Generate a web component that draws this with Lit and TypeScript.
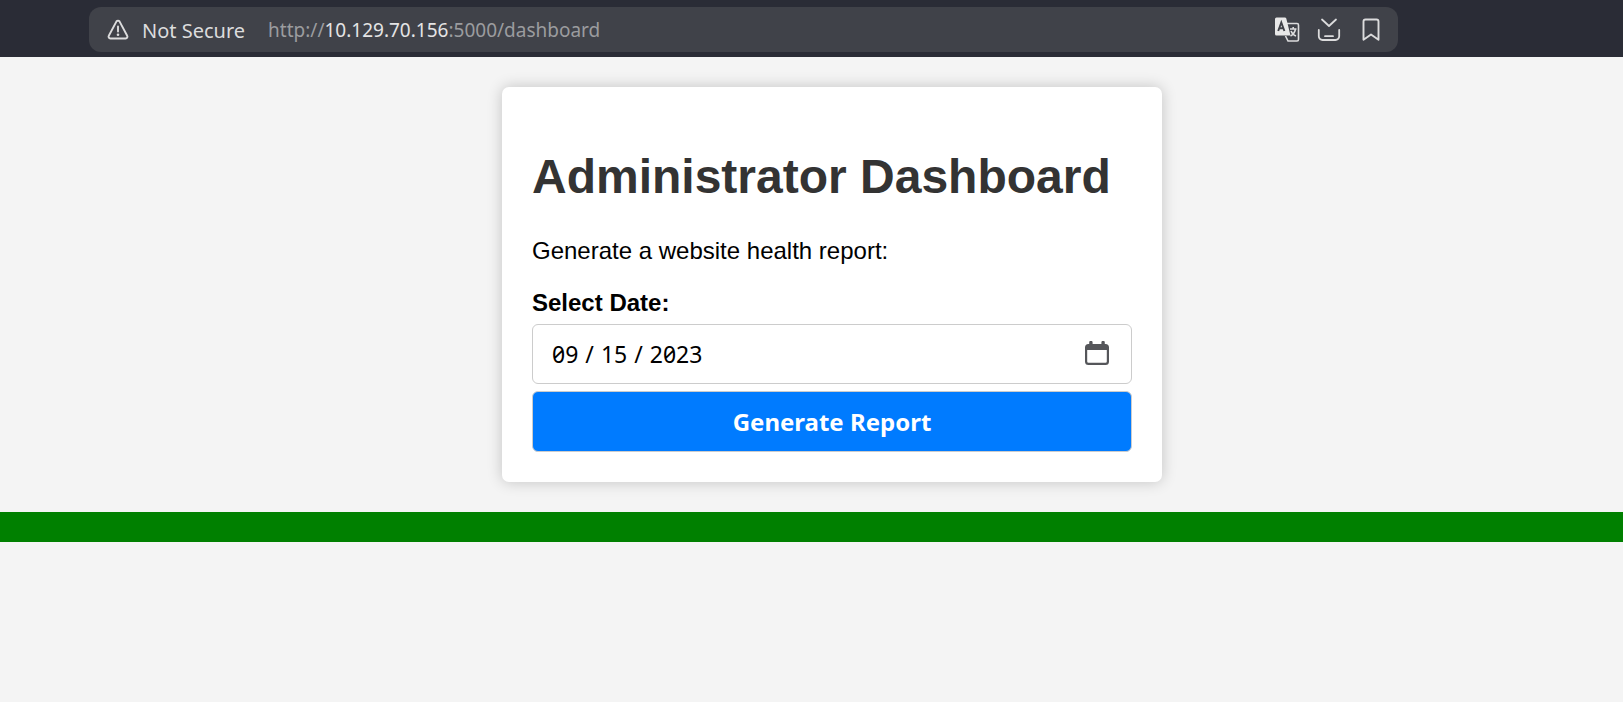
import { LitElement, html, css } from "lit";
import { customElement, state } from "lit/decorators.js";

@customElement("address-bar")
export class AddressBar extends LitElement {
  static styles = css`
    :host {
      display: block;
      background: #2a2c36;
      padding: 7px 225px 5px 89px;
      font-family: "Noto Sans", "Open Sans", sans-serif;
      font-size: 20px;
      line-height: 43px;
      color: #dcdcdd;
    }
    .bar {
      display: flex;
      align-items: center;
      height: 45px;
      padding: 0 14px 0 18px;
      border-radius: 12px;
      background: #404249;
    }
    .security {
      display: flex;
      align-items: center;
      gap: 13px;
      margin-right: 23px;
    }
    button {
      border: 0;
      padding: 0;
      background: none;
      color: inherit;
      font: inherit;
      white-space: nowrap;
      cursor: pointer;
    }
    svg {
      display: block;
      flex: none;
    }
    .security span,
    .url {
      padding-top: 2px;
    }
    .url {
      flex: 1;
      min-width: 0;
      overflow: hidden;
      white-space: nowrap;
      text-overflow: ellipsis;
      text-decoration: none;
      font-size: 19px;
      color: #9b9c9f;
    }
    .host {
      color: #e4e4e5;
    }
    .actions {
      display: flex;
      gap: 16px;
    }
  `;

  render() {
    return html`
      <div class="bar">
        <button class="security">
          <svg width="22" height="22" viewBox="0 0 22 22" fill="none" stroke="currentColor" stroke-width="1.9" stroke-linejoin="round" stroke-linecap="round">
            <path d="M9.500 2.400a1.800 1.800 0 0 1 3 0l7.700 14.400a1.800 1.800 0 0 1-1.500 2.700H3.300a1.800 1.800 0 0 1-1.500-2.700z" />
            <path d="M11 7.500v5" />
            <circle cx="11" cy="15.800" r="1.300" fill="currentColor" stroke="none" />
          </svg>
          <span>Not Secure</span>
        </button>
        <a class="url" href="http://10.129.70.156:5000/dashboard">http://<span class="host">10.129.70.156</span>:5000/dashboard</a>
        <div class="actions">
          <button aria-label="Translate page">
            <svg width="26" height="26" viewBox="0 0 26 26">
              <path d="M13 6.500h10a1.500 1.500 0 0 1 1.500 1.500V22.500a1.500 1.500 0 0 1-1.500 1.500H14L11.500 19" fill="none" stroke="currentColor" stroke-width="1.600" />
              <path d="M2.500 .5h8.300a1.500 1.500 0 0 1 1.500 1.100L16.500 18.500H2.500A1.500 1.500 0 0 1 1 17V2A1.500 1.500 0 0 1 2.500 .5z" fill="#e8e8e8" />
              <path d="M4.200 14L7.300 5.500 10.400 14M5.300 11.200h4" fill="none" stroke="#404249" stroke-width="1.900" />
              <path d="M16 12H22.500M19.200 10v2M21.500 12.300c-.8 3.200-2.500 5.500-5 6.700M17 14c1 2.300 2.500 4.200 5 5" fill="none" stroke="currentColor" stroke-width="1.600" />
            </svg>
          </button>
          <button aria-label="Save to Pocket">
            <svg width="26" height="26" viewBox="0 0 26 26" fill="none" stroke="currentColor" stroke-width="1.800" stroke-linecap="round" stroke-linejoin="round">
              <path d="M6 2.500l7 6.500 7-6.500" />
              <path d="M2.800 13v6.300a3.700 3.700 0 0 0 3.700 3.700h13a3.700 3.700 0 0 0 3.700-3.700V13" />
              <path d="M9 19.200h8" />
            </svg>
          </button>
          <button aria-label="Bookmark page">
            <svg width="26" height="26" viewBox="0 0 26 26" fill="none" stroke="currentColor" stroke-width="1.900" stroke-linejoin="round">
              <path d="M5.500 22.800V4.500a2 2 0 0 1 2-2h11a2 2 0 0 1 2 2v18.300L13 17.500z" />
            </svg>
          </button>
        </div>
      </div>
    `;
  }
}

@customElement("report-card")
export class ReportCard extends LitElement {
  static styles = css`
    :host {
      display: block;
      box-sizing: border-box;
      max-width: 660px;
      margin: 0 auto;
      padding: 30px;
      border-radius: 7px;
      background: #fff;
      box-shadow: 0 0 15px rgba(0, 0, 0, 0.2);
      font-size: 24px;
      line-height: 28px;
      color: #000;
    }
    h1 {
      margin: 33px 0;
      font-size: 48px;
      line-height: 54px;
      color: #333;
    }
    p {
      margin: 0 0 24px;
    }
    form {
      display: flex;
      flex-direction: column;
    }
    label {
      margin-bottom: 7px;
      font-weight: bold;
    }
    input,
    button {
      box-sizing: border-box;
      width: 100%;
      height: 60px;
      border: 1px solid #ccc;
      border-radius: 6px;
    }
    input {
      margin: 0 0 7px;
      padding: 0 21px 0 16px;
      background: #fff;
      color: #000;
      font-family: "Noto Sans", "DejaVu Sans Mono", monospace;
      font-feature-settings: "zero";
      font-size: 23px;
      line-height: 28px;
    }
    input::-webkit-datetime-edit-month-field,
    input::-webkit-datetime-edit-day-field,
    input::-webkit-datetime-edit-year-field {
      padding: 0 3px;
    }
    input::-webkit-datetime-edit-text {
      padding: 0 4px;
    }
    input::-webkit-calendar-picker-indicator {
      width: 26px;
      height: 26px;
      margin: 0;
      padding: 0;
      background: url("data:image/svg+xml,%3Csvg xmlns='http://www.w3.org/2000/svg' viewBox='0 0 26 26'%3E%3Cpath fill='%2355565a' fill-rule='evenodd' d='M5.200 1.500a1.700 1.700 0 0 1 3.400 0V3h8.800V1.500a1.700 1.700 0 0 1 3.400 0V3h.7A3.500 3.500 0 0 1 25 6.500V20.500a3.500 3.500 0 0 1-3.500 3.500h-17A3.500 3.500 0 0 1 1 20.500v-14A3.500 3.500 0 0 1 4.500 3h.7zM3.200 9v11.500A1.300 1.300 0 0 0 4.500 21.800h17a1.300 1.300 0 0 0 1.300-1.300V9z'/%3E%3C/svg%3E") center / contain no-repeat;
    }
    button {
      height: 61px;
      padding: 0;
      background: #007bff;
      color: #fff;
      font-family: "Noto Sans", "Open Sans", sans-serif;
      font-size: 24px;
      font-weight: bold;
      cursor: pointer;
    }
  `;

  @state() private date = "2023-09-15";

  private onDate(event: Event) {
    this.date = (event.target as HTMLInputElement).value;
  }

  render() {
    return html`
      <h1>Administrator Dashboard</h1>
      <p>Generate a website health report:</p>
      <form @submit=${(event: Event) => event.preventDefault()}>
        <label for="date">Select Date:</label>
        <input id="date" name="date" type="date" .value=${this.date} @change=${this.onDate} />
        <button type="submit">Generate Report</button>
      </form>
    `;
  }
}

@customElement("app-root")
export class AppRoot extends LitElement {
  static styles = css`
    :host {
      display: block;
      min-height: 100vh;
      background: #f4f4f4;
      font-family: "Liberation Sans", Arial, sans-serif;
    }
    main {
      padding: 30px 0 30px 41px;
    }
    .status {
      height: 30px;
      background: #008000;
    }
  `;

  render() {
    return html`
      <address-bar></address-bar>
      <main><report-card></report-card></main>
      <div class="status"></div>
    `;
  }
}
